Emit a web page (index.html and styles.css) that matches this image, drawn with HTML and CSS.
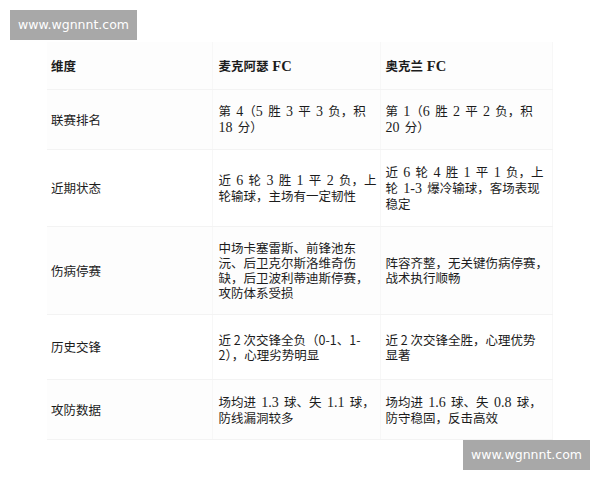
FILE: index.html
```html
<!DOCTYPE html>
<html lang="zh">
<head>
<meta charset="utf-8">
<link rel="stylesheet" href="styles.css">
</head>
<body>
<div class="page">
  <table class="cmp">
    <colgroup><col class="c1"><col class="c2"><col class="c3"></colgroup>
    <tr class="rh">
      <th class="k">维度</th>
      <th>麦克阿瑟 <span class="n">FC</span></th>
      <th>奥克兰 <span class="n">FC</span></th>
    </tr>
    <tr class="r1">
      <td class="k">联赛排名</td>
      <td>第 <span class="n">4</span>（<span class="n">5</span> 胜 <span class="n">3</span> 平 <span class="n">3</span> 负，积<br><span class="n">18</span> 分）</td>
      <td>第 <span class="n">1</span>（<span class="n">6</span> 胜 <span class="n">2</span> 平 <span class="n">2</span> 负，积<br><span class="n">20</span> 分）</td>
    </tr>
    <tr class="r2">
      <td class="k">近期状态</td>
      <td>近 <span class="n">6</span> 轮 <span class="n">3</span> 胜 <span class="n">1</span> 平 <span class="n">2</span> 负，上<br>轮输球，主场有一定韧性</td>
      <td>近 <span class="n">6</span> 轮 <span class="n">4</span> 胜 <span class="n">1</span> 平 <span class="n">1</span> 负，上<br>轮 <span class="n">1-3</span> 爆冷输球，客场表现<br>稳定</td>
    </tr>
    <tr class="r3">
      <td class="k">伤病停赛</td>
      <td class="sans">中场卡塞雷斯、前锋池东<br>沅、后卫克尔斯洛维奇伤<br>缺，后卫波利蒂迪斯停赛，<br>攻防体系受损</td>
      <td class="sans">阵容齐整，无关键伤病停赛，<br>战术执行顺畅</td>
    </tr>
    <tr class="r4">
      <td class="k">历史交锋</td>
      <td class="sans">近 2 次交锋全负（0-1、1-<br>2），心理劣势明显</td>
      <td class="sans">近 2 次交锋全胜，心理优势<br>显著</td>
    </tr>
    <tr class="r5">
      <td class="k">攻防数据</td>
      <td>场均进 <span class="n">1.3</span> 球、失 <span class="n">1.1</span> 球，<br>防线漏洞较多</td>
      <td>场均进 <span class="n">1.6</span> 球、失 <span class="n">0.8</span> 球，<br>防守稳固，反击高效</td>
    </tr>
  </table>
  <div class="wm wm-top">www.wgnnnt.com</div>
  <div class="wm wm-bottom">www.wgnnnt.com</div>
</div>
</body>
</html>
```
FILE: styles.css
```css
html, body {
  margin: 0;
  padding: 0;
  background: #ffffff;
}
.page {
  position: relative;
  width: 600px;
  height: 480px;
  padding: 42px 0 0 47px;
  box-sizing: border-box;
  color: #1c1c1c;
  font-family: "Noto Sans CJK SC", sans-serif;
  font-size: 12.5px;
  line-height: 15px;
}
.cmp {
  border-collapse: collapse;
  table-layout: fixed;
  width: 505px;
}
.c1 { width: 165px; }
.c2 { width: 168px; }
.c3 { width: 172px; }
.cmp th, .cmp td {
  text-align: left;
  vertical-align: middle;
  padding: 0 4px 0 6px;
  border-left: 1px solid #f7f7f7;
  border-bottom: 1px solid #f3f3f3;
  white-space: nowrap;
  word-spacing: 2.5px;
}
.cmp tr > :first-child { border-left: none; padding-left: 4px; }
.cmp tr > :nth-child(3) { padding-left: 5px; border-right: 1px solid #f7f7f7; }
.cmp th {
  font-weight: bold;
  word-spacing: 1px;
}
.n {
  font-family: "Liberation Serif", serif;
  font-size: 14px;
  line-height: 1;
}
th .n { font-size: 14.5px; }
.cmp .sans { word-spacing: 0; }
.rh { height: 47px; background: #fdfdfd; }
.r1 { height: 60px; background: #fdfdfd; }
.r2 { height: 77px; }
.r3 { height: 88px; background: #fdfdfd; }
.r4 { height: 65px; }
.r5 { height: 60px; background: #fdfdfd; }
.wm {
  position: absolute;
  width: 127px;
  height: 30px;
  background: #a8a8a8;
  color: #ffffff;
  font-family: "DejaVu Sans", sans-serif;
  font-size: 12.5px;
  line-height: 30px;
  text-align: center;
}
.wm-top { left: 10px; top: 10px; }
.wm-bottom { left: 463px; top: 440px; }
```
